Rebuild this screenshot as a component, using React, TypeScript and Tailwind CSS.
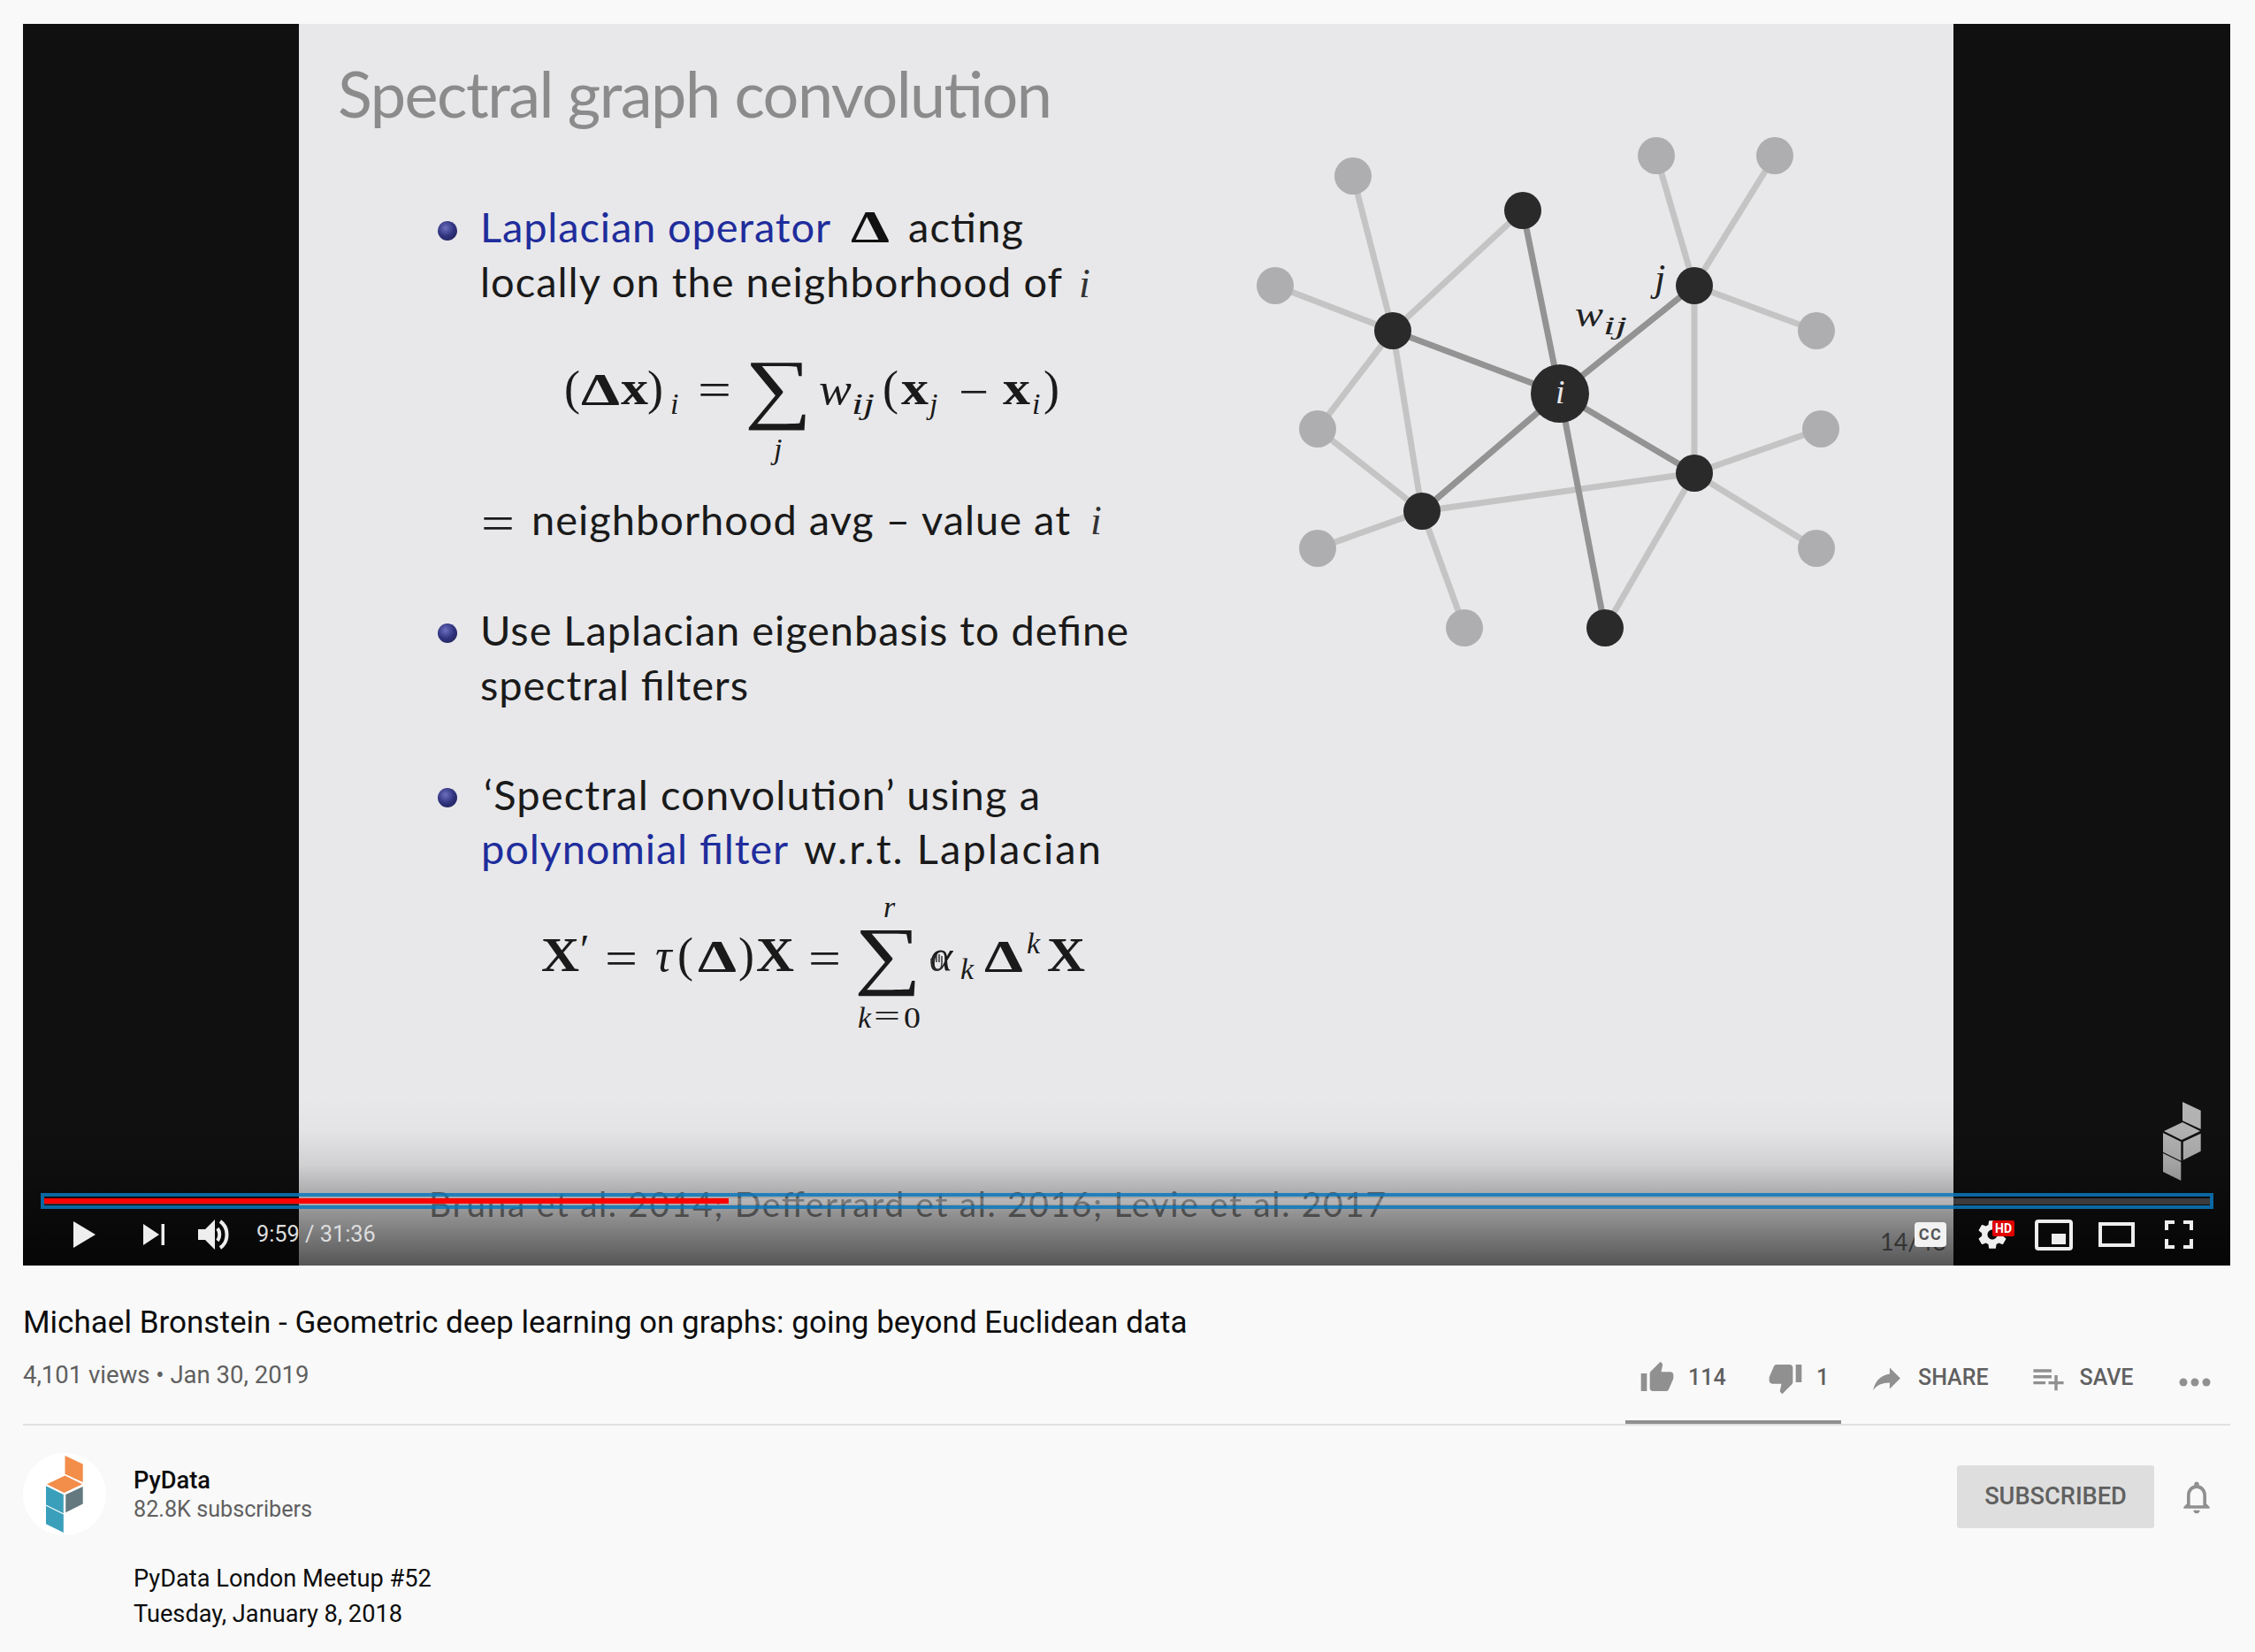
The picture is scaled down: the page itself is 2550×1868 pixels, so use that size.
import React from "react";

const lightNodes = [
  [1530, 199], [1442, 323], [1490, 485], [1490, 620], [1656, 710],
  [1873, 176], [2007, 176], [2054, 374], [2059, 485], [2054, 620],
];
const darkNodes = [
  [1575, 374], [1722, 238], [1916, 323], [1608, 578], [1916, 535], [1815, 710],
];
const lightEdges = [
  [1530, 199, 1575, 374], [1442, 323, 1575, 374], [1490, 485, 1575, 374], [1490, 485, 1608, 578],
  [1575, 374, 1722, 238], [1575, 374, 1608, 578], [1490, 620, 1608, 578], [1656, 710, 1608, 578],
  [1608, 578, 1916, 535], [1873, 176, 1916, 323], [2007, 176, 1916, 323], [1916, 323, 2054, 374],
  [1916, 323, 1916, 535], [1916, 535, 2059, 485], [1916, 535, 2054, 620], [1916, 535, 1815, 710],
];
const darkEdges = [
  [1575, 374], [1722, 238], [1916, 323], [1608, 578], [1916, 535], [1815, 710],
];

const sans = "font-['Lato',sans-serif] font-normal";
const serif = "font-['Liberation_Serif',serif]";
const serifItalic = "font-['Liberation_Serif',serif] italic";
const serifBold = "font-['Liberation_Serif',serif] font-bold";

// One stretched math glyph, the slide's font is wider than anything installed
function Glyph({ x, y, size, w, className, children }: { x: number; y: number; size: number; w: number; className: string; children: React.ReactNode }) {
  return (
    <text x={x} y={y} fontSize={size} textLength={w} lengthAdjust="spacingAndGlyphs" className={className}>
      {children}
    </text>
  );
}

// The video frame is a picture, so the slide is one drawing
function Slide() {
  return (
    <svg viewBox="338 27 1871 1404" className="block w-[1871px] h-[1404px] shrink-0 bg-[#e8e8ea]">
      <defs>
        <radialGradient id="ball" cx="40%" cy="35%" r="70%">
          <stop offset="0%" stopColor="#6d70c0" />
          <stop offset="60%" stopColor="#31347f" />
          <stop offset="100%" stopColor="#23255f" />
        </radialGradient>
      </defs>

      <text x="382" y="133" fontSize="72" textLength="808" fill="#8b8b8b" className={sans}>Spectral graph convolution</text>

      <circle cx="506" cy="261" r="11" fill="url(#ball)" />
      <text x="543" y="274" fontSize="47" textLength="396" fill="#1f2d9c" className={sans}>Laplacian operator</text>
      <g fill="#111">
        <Glyph x={962} y={273} size={50} w={44} className={serifBold}>Δ</Glyph>
      </g>
      <text x="1027" y="274" fontSize="47" textLength="130" fill="#1a1a1a" className={sans}>acting</text>
      <text x="543" y="336" fontSize="47" textLength="658" fill="#1a1a1a" className={sans}>locally on the neighborhood of</text>
      <text x="1220" y="336" fontSize="46" fill="#333" className={serifItalic}>i</text>

      <g fill="#1a1a1a">
        <text x="638" y="457" fontSize="54" className={serif}>(</text>
        <Glyph x={657} y={457} size={50} w={44} className={serifBold}>Δ</Glyph>
        <Glyph x={702} y={457} size={54} w={31} className={serifBold}>x</Glyph>
        <text x="732" y="457" fontSize="54" className={serif}>)</text>
        <text x="758" y="468" fontSize="34" className={serifItalic}>i</text>
        <Glyph x={789} y={459} size={54} w={38} className={serif}>=</Glyph>
        <Glyph x={842} y={468} size={88} w={76} className={serif}>∑</Glyph>
        <text x="875" y="519" fontSize="34" className={serifItalic}>j</text>
        <Glyph x={926} y={457} size={50} w={37} className={serifItalic}>w</Glyph>
        <Glyph x={963} y={468} size={34} w={26} className={serifItalic}>ij</Glyph>
        <text x="998" y="457" fontSize="54" className={serif}>(</text>
        <Glyph x={1019} y={457} size={54} w={31} className={serifBold}>x</Glyph>
        <text x="1051" y="468" fontSize="34" className={serifItalic}>j</text>
        <Glyph x={1084} y={461} size={54} w={34} className={serif}>−</Glyph>
        <Glyph x={1134} y={457} size={54} w={31} className={serifBold}>x</Glyph>
        <text x="1167" y="468" fontSize="34" className={serifItalic}>i</text>
        <text x="1180" y="457" fontSize="54" className={serif}>)</text>
      </g>

      <g fill="#1a1a1a">
        <Glyph x={544} y={610} size={54} w={38} className={serif}>=</Glyph>
      </g>
      <text x="601" y="605" fontSize="47" textLength="609" fill="#1a1a1a" className={sans}>neighborhood avg – value at</text>
      <text x="1233" y="604" fontSize="46" fill="#333" className={serifItalic}>i</text>

      <circle cx="506" cy="716" r="11" fill="url(#ball)" />
      <text x="543" y="730" fontSize="47" textLength="733" fill="#1a1a1a" className={sans}>Use Laplacian eigenbasis to define</text>
      <text x="543" y="792" fontSize="47" textLength="303" fill="#1a1a1a" className={sans}>spectral filters</text>

      <circle cx="506" cy="902" r="11" fill="url(#ball)" />
      <text x="547" y="916" fontSize="47" textLength="629" fill="#1a1a1a" className={sans}>‘Spectral convolution’ using a</text>
      <text x="544" y="977" fontSize="47" textLength="347" fill="#1f2d9c" className={sans}>polynomial filter</text>
      <text x="909" y="977" fontSize="47" textLength="336" fill="#1a1a1a" className={sans}>w.r.t. Laplacian</text>

      <g fill="#1a1a1a">
        <Glyph x={612} y={1098} size={54} w={43} className={serifBold}>X</Glyph>
        <text x="653" y="1090" fontSize="48" className={serifItalic}>′</text>
        <Glyph x={684} y={1102} size={54} w={37} className={serif}>=</Glyph>
        <text x="741" y="1098" fontSize="52" className={serifItalic}>τ</text>
        <text x="766" y="1098" fontSize="54" className={serif}>(</text>
        <Glyph x={789} y={1098} size={50} w={44} className={serifBold}>Δ</Glyph>
        <text x="835" y="1098" fontSize="54" className={serif}>)</text>
        <Glyph x={855} y={1098} size={54} w={43} className={serifBold}>X</Glyph>
        <Glyph x={914} y={1102} size={54} w={37} className={serif}>=</Glyph>
        <Glyph x={966} y={1108} size={86} w={76} className={serif}>∑</Glyph>
        <text x="999" y="1037" fontSize="34" className={serifItalic}>r</text>
        <text x="970" y="1162" fontSize="34" className={serifItalic}>k</text>
        <Glyph x={988} y={1160} size={34} w={30} className={serif}>=</Glyph>
        <Glyph x={1022} y={1162} size={34} w={19} className={serif}>0</Glyph>
        <text x="1051" y="1098" fontSize="50" className={serifItalic}>α</text>
        <text x="1086" y="1107" fontSize="34" className={serifItalic}>k</text>
        <Glyph x={1113} y={1098} size={50} w={44} className={serifBold}>Δ</Glyph>
        <text x="1161" y="1078" fontSize="34" className={serifItalic}>k</text>
        <Glyph x={1184} y={1098} size={54} w={43} className={serifBold}>X</Glyph>
      </g>
      {/* hand cursor of the presenter */}
      <path d="M1056 1088v-7m3 7v-9m3 9v-9m3 9v-7m-9 6l-3-2c0 6 3 12 7 12s5-3 5-9" fill="none" stroke="#333" strokeWidth="1.5" />

      {lightEdges.map((e, i) => (
        <line key={i} x1={e[0]} y1={e[1]} x2={e[2]} y2={e[3]} stroke="#c4c4c4" strokeWidth="7" />
      ))}
      {darkEdges.map((e, i) => (
        <line key={i} x1="1764" y1="445" x2={e[0]} y2={e[1]} stroke="#939393" strokeWidth="7" />
      ))}
      {lightNodes.map((n, i) => (
        <circle key={i} cx={n[0]} cy={n[1]} r="21" fill="#aeaeb0" />
      ))}
      {darkNodes.map((n, i) => (
        <circle key={i} cx={n[0]} cy={n[1]} r="21" fill="#2b2a2b" />
      ))}
      <circle cx="1764" cy="445" r="33" fill="#2b2a2b" />
      <text x="1759" y="456" fontSize="38" fill="#e8e8ea" className={serifItalic}>i</text>
      <text x="1871" y="329" fontSize="44" fill="#222" className={serifItalic}>j</text>
      <g fill="#222">
        <Glyph x={1781} y={369} size={40} w={32} className={serifItalic}>w</Glyph>
        <Glyph x={1813} y={378} size={30} w={27} className={serifItalic}>ij</Glyph>
      </g>

      <text x="485" y="1376" fontSize="39" textLength="1082" fill="#7a7a7a" className={sans}>Bruna et al. 2014; Defferrard et al. 2016; Levie et al. 2017</text>
      <text x="2126" y="1414" fontSize="27" fill="#6a6a6a" className={sans}>14/48</text>
    </svg>
  );
}

function PyDataLogo({ className, fills }: { className: string; fills: string[] }) {
  return (
    <svg viewBox="0 0 43 89" className={className}>
      <polygon points="22,0 42.7,9.7 42.7,30.7 22,21.3" fill={fills[0]} />
      <polygon points="22,23 42,33 21,43 1,33" fill={fills[0]} />
      <polygon points="0,35 20.3,45 20.3,66.7 0,56.7" fill={fills[1]} />
      <polygon points="22.8,45 42.7,35.7 42.7,55.7 22.8,65.7" fill={fills[2]} />
      <polygon points="0,58 20.3,68 20.3,89 0,79" fill={fills[1]} />
    </svg>
  );
}

function VideoControls() {
  return (
    <div className="absolute bottom-0 left-0 right-0 h-[82px]">
      {/* progress bar */}
      <div className="ml-[20px] mr-[19px] h-[18px] border-4 border-[#0c78bcd9] flex items-center">
        <div className="w-full h-[7px] bg-white/20">
          <div className="w-[774px] h-[6px] bg-[#ff0000]" />
        </div>
      </div>

      <div className="h-[64px] flex items-center pl-[57px] pr-[42px] pb-[6px] text-[#eeeeee]">
        <svg viewBox="0 0 25 30" className="w-[25px] h-[30px]" fill="#eeeeee">
          <polygon points="0,0 25,15 0,30" />
        </svg>
        <svg viewBox="0 0 24 24" className="w-[24px] h-[24px] ml-[54px]" fill="#eeeeee">
          <polygon points="0,0 18,12 0,24" />
          <rect x="20.5" y="0" width="3.5" height="24" />
        </svg>
        <svg viewBox="0 0 37 34" className="w-[37px] h-[34px] ml-[38px]" fill="none">
          <polygon points="0,11 8,11 19,0 19,34 8,23 0,23" fill="#eeeeee" />
          <path d="M22 10c3 4 3 10 0 14" stroke="#eeeeee" strokeWidth="4" />
          <path d="M25 2c10 7 10 23 0 30" stroke="#eeeeee" strokeWidth="4" />
        </svg>
        <span className="ml-[29px] text-[25.3px] leading-none text-[#dddddd]">9:59 / 31:36</span>

        <div className="ml-auto w-[36px] h-[28px] rounded-[4px] bg-[#f2f2f2] flex items-center justify-center text-[18px] leading-none font-bold tracking-[1.5px] text-[#555555]">
          CC
        </div>
        <div className="relative ml-[33px] w-[44px] h-[38px]">
          <svg viewBox="0 0 24 24" className="w-[38px] h-[38px]" fill="#eeeeee">
            <path d="M19.43 12.98c.04-.32.07-.64.07-.98s-.03-.66-.07-.98l2.11-1.65c.19-.15.24-.42.12-.64l-2-3.46c-.12-.22-.39-.3-.61-.22l-2.49 1c-.52-.4-1.08-.73-1.69-.98l-.38-2.65C14.46 2.18 14.25 2 14 2h-4c-.25 0-.46.18-.49.42l-.38 2.65c-.61.25-1.17.59-1.69.98l-2.49-1c-.23-.09-.49 0-.61.22l-2 3.46c-.13.22-.07.49.12.64l2.11 1.65c-.04.32-.07.65-.07.98s.03.66.07.98l-2.11 1.65c-.19.15-.24.42-.12.64l2 3.46c.12.22.39.3.61.22l2.49-1c.52.4 1.08.73 1.69.98l.38 2.65c.03.24.24.42.49.42h4c.25 0 .46-.18.49-.42l.38-2.65c.61-.25 1.17-.59 1.69-.98l2.49 1c.23.09.49 0 .61-.22l2-3.46c.12-.22.07-.49-.12-.64l-2.11-1.65zM12 15.5c-1.93 0-3.5-1.57-3.5-3.5s1.57-3.5 3.5-3.5 3.5 1.57 3.5 3.5-1.57 3.5-3.5 3.5z" />
          </svg>
          <span className="absolute top-[3px] right-0 w-[25px] h-[18px] rounded-[2px] bg-[#e00000] flex items-center justify-center text-[14px] leading-none font-bold text-white">
            HD
          </span>
        </div>
        <div className="ml-[23px] w-[43px] h-[35px] border-4 border-[#eeeeee] rounded-[4px] flex items-end justify-end pr-[4px] pb-[3px]">
          <div className="w-[16px] h-[12px] bg-[#eeeeee]" />
        </div>
        <div className="ml-[29px] w-[41px] h-[28px] border-4 border-[#eeeeee]" />
        <svg viewBox="0 0 32 32" className="w-[32px] h-[32px] ml-[34px]" fill="none" stroke="#eeeeee" strokeWidth="4">
          <path d="M2 11V2h9M21 2h9v9M30 21v9h-9M11 30H2v-9" />
        </svg>
      </div>
    </div>
  );
}

export default function App() {
  return (
    <div className="w-full min-h-screen bg-[#f9f9f9] pl-[26px] pr-[28px] pt-[27px] font-['Roboto',sans-serif] overflow-hidden">
      {/* ── Player ── */}
      <div className="relative h-[1404px] flex bg-[#101010] overflow-hidden">
        <div className="w-[312px] shrink-0" />
        <Slide />
        <div className="absolute right-[33px] top-[1219px]">
          <PyDataLogo className="w-[43px] h-[89px]" fills={["#b4b4b4", "#b4b4b4", "#b4b4b4"]} />
        </div>
        <div className="absolute bottom-0 left-0 right-0 h-[190px] bg-[linear-gradient(to_bottom,rgba(0,0,0,0)_0%,rgba(0,0,0,0.02)_20%,rgba(0,0,0,0.1)_40%,rgba(0,0,0,0.27)_58%,rgba(0,0,0,0.42)_75%,rgba(0,0,0,0.63)_100%)]" />
        <VideoControls />
      </div>

      {/* ── Title and actions ── */}
      <h1 className="mt-[43px] text-[35.05px] leading-[42px] font-normal text-[#0d0d0d]">
        Michael Bronstein - Geometric deep learning on graphs: going beyond Euclidean data
      </h1>
      <div className="h-[94px] flex justify-between border-b-2 border-[#e0e0e0] box-content">
        <div className="pt-[21px] text-[27.5px] leading-[36px] text-[#606060]">4,101 views • Jan 30, 2019</div>
        <div className="w-[684px]">
          <div className="h-[84px] flex items-center text-[25px] font-medium text-[#606060]">
            <svg viewBox="0 0 24 24" className="w-[40px] h-[40px] ml-[16px]" fill="#909090">
              <path d="M1 21h4V9H1v12zm22-11c0-1.1-.9-2-2-2h-6.31l.95-4.57.03-.32c0-.41-.17-.79-.44-1.06L14.17 1 7.59 7.59C7.22 7.95 7 8.45 7 9v10c0 1.1.9 2 2 2h9c.83 0 1.54-.5 1.84-1.22l3.02-7.05c.09-.23.14-.47.14-.73v-1.91l-.01-.01L23 10z" />
            </svg>
            <span className="ml-[15px] w-[45px]">114</span>
            <svg viewBox="0 0 24 24" className="w-[40px] h-[40px] ml-[45px]" fill="#909090">
              <path d="M15 3H6c-.83 0-1.54.5-1.84 1.22l-3.02 7.05c-.09.23-.14.47-.14.73v1.91l.01.01L1 14c0 1.1.9 2 2 2h6.31l-.95 4.57-.03.32c0 .41.17.79.44 1.06L9.83 23l6.59-6.59c.36-.36.58-.86.58-1.41V5c0-1.1-.9-2-2-2zm4 0v12h4V3h-4z" />
            </svg>
            <span className="ml-[15px] w-[16px]">1</span>
            <svg viewBox="0 0 24 24" className="w-[41px] h-[41px] ml-[43px]" fill="#909090">
              <path d="M14 9V5l7 7-7 7v-4.1c-5 0-8.5 1.6-11 5.1 1-5 4-10 11-11z" />
            </svg>
            <span className="ml-[15px]">SHARE</span>
            <svg viewBox="0 0 24 24" className="w-[41px] h-[41px] ml-[47px]" fill="#909090">
              <path d="M14 10H2v2h12v-2zm0-4H2v2h12V6zm4 8v-4h-2v4h-4v2h4v4h2v-4h4v-2h-4zM2 16h8v-2H2v2z" />
            </svg>
            <span className="ml-[15px]">SAVE</span>
            <svg viewBox="0 0 36 10" className="w-[36px] h-[10px] ml-[51px] mt-[10px]" fill="#909090">
              <circle cx="5" cy="5" r="4.5" />
              <circle cx="18" cy="5" r="4.5" />
              <circle cx="31" cy="5" r="4.5" />
            </svg>
          </div>
          <div className="mt-[6px] w-[244px] h-[4px] bg-[#909090]" />
        </div>
      </div>

      {/* ── Channel ── */}
      <div className="pt-[31px] flex justify-between">
        <div className="flex gap-[31px]">
          <div className="w-[94px] h-[93px] rounded-full bg-white flex items-center justify-center">
            <PyDataLogo className="w-[42px] h-[91px]" fills={["#f28d4a", "#3a9fba", "#63797f"]} />
          </div>
          <div className="pt-[15px]">
            <div className="text-[27.2px] leading-[33px] font-medium text-[#0d0d0d]">PyData</div>
            <div className="text-[25.2px] leading-[32px] text-[#606060]">82.8K subscribers</div>
          </div>
        </div>
        <div className="mt-[14px] h-[71px] mr-[16px] flex items-center gap-[26px]">
          <button className="w-[223px] h-[71px] rounded-[3px] bg-[#dedede] text-[27.2px] font-medium text-[#606060]">
            SUBSCRIBED
          </button>
          <svg viewBox="0 0 24 24" className="w-[44px] h-[44px]" fill="#909090">
            <path d="M12 22c1.1 0 2-.9 2-2h-4c0 1.1.9 2 2 2zm6-6v-5c0-3.07-1.63-5.64-4.5-6.32V4c0-.83-.67-1.5-1.5-1.5s-1.5.67-1.5 1.5v.68C7.64 5.36 6 7.92 6 11v5l-2 2v1h16v-1l-2-2zm-2 1H8v-6c0-2.48 1.51-4.5 4-4.5s4 2.02 4 4.5v6z" />
          </svg>
        </div>
      </div>
      <div className="mt-[29px] pl-[125px] text-[27.2px] leading-[40px] text-[#0d0d0d]">
        <div>PyData London Meetup #52</div>
        <div>Tuesday, January 8, 2018</div>
      </div>
    </div>
  );
}
